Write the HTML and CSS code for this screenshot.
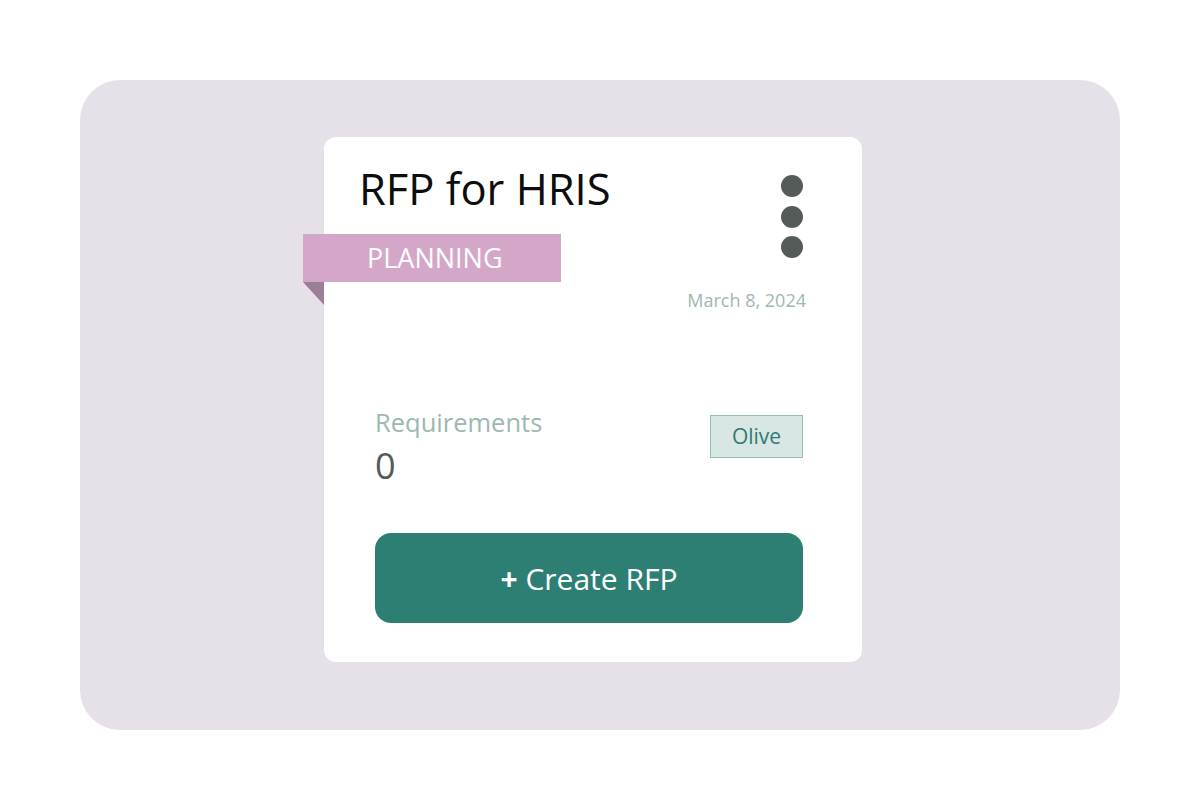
FILE: index.html
```html
<!DOCTYPE html>
<html lang="en">
<head>
    <meta charset="UTF-8">
    <meta name="viewport" content="width=device-width, initial-scale=1.0">
    <title>RFP for HRIS</title>
    <link rel="stylesheet" href="styles.css">
</head>
<body>
    <div class="panel">
        <div class="card">
            <div class="card-top">
                <div class="card-head">
                    <h2 class="card-title">RFP for HRIS</h2>
                    <div class="ribbon">PLANNING</div>
                </div>
                <div class="menu">
                    <span class="dot"></span>
                    <span class="dot"></span>
                    <span class="dot"></span>
                </div>
            </div>

            <div class="date">March 8, 2024</div>

            <div class="meta">
                <div class="stat">
                    <div class="stat-label">Requirements</div>
                    <div class="stat-value">0</div>
                </div>
                <span class="tag">Olive</span>
            </div>

            <button class="create-btn"><b>+</b> Create RFP</button>
        </div>
    </div>
</body>
</html>
```

FILE: styles.css
```css
body {
    margin: 0;
    font-family: 'Open Sans', 'Noto Sans', sans-serif;
    background: white;
}

.panel {
    margin: 80px;
    height: 650px;
    box-sizing: border-box;
    padding: 57px 0 0 244px;
    background: #e6e1e8;
    border-radius: 40px;
}

.card {
    width: 538px;
    height: 525px;
    box-sizing: border-box;
    padding: 28px 59px 39px 51px;
    background: white;
    border-radius: 12px;
    display: flex;
    flex-direction: column;
}

.card-top {
    display: flex;
    justify-content: space-between;
    align-items: flex-start;
}

.card-title {
    margin: 0 0 0 -16px;
    font-size: 43.5px;
    line-height: 48px;
    font-weight: 400;
    color: #0d0d0d;
}

/* ribbon sticks out past the card edge */
.ribbon {
    position: relative;
    margin: 21px 0 0 -72px;
    width: 258px;
    height: 48px;
    box-sizing: border-box;
    padding-left: 64px;
    background: #d4a7c8;
    color: white;
    font-size: 27px;
    line-height: 48px;
}

.ribbon::after {
    content: '';
    position: absolute;
    left: 0;
    top: 100%;
    width: 21px;
    height: 23px;
    background: #9c7f94;
    clip-path: polygon(0 0, 100% 0, 100% 100%);
}

.menu {
    display: flex;
    flex-direction: column;
    gap: 8.5px;
    margin-top: 10px;
}

.dot {
    width: 22px;
    height: 22px;
    border-radius: 50%;
    background: #555b59;
}

.date {
    align-self: flex-end;
    margin: 7px -3px 0 0;
    font-size: 18px;
    line-height: 22px;
    color: #9fb7b2;
}

.meta {
    display: flex;
    justify-content: space-between;
    align-items: flex-start;
    margin-top: 95px;
}

.stat-label {
    font-size: 25.5px;
    line-height: 32px;
    color: #9cb8b1;
}

.stat-value {
    margin-top: 8px;
    font-size: 36px;
    line-height: 40px;
    color: #555b59;
}

.tag {
    margin-top: 9px;
    width: 93px;
    height: 43px;
    box-sizing: border-box;
    border: 1.5px solid #92bdb2;
    background: #d8e7e3;
    color: #2f7b6f;
    font-size: 21px;
    line-height: 40px;
    text-align: center;
}

.create-btn {
    margin-top: 47px;
    height: 90px;
    border: none;
    border-radius: 16px;
    background: #2d7f74;
    color: white;
    font-family: inherit;
    font-size: 30px;
}

.create-btn b {
    font-weight: 700;
}
```
